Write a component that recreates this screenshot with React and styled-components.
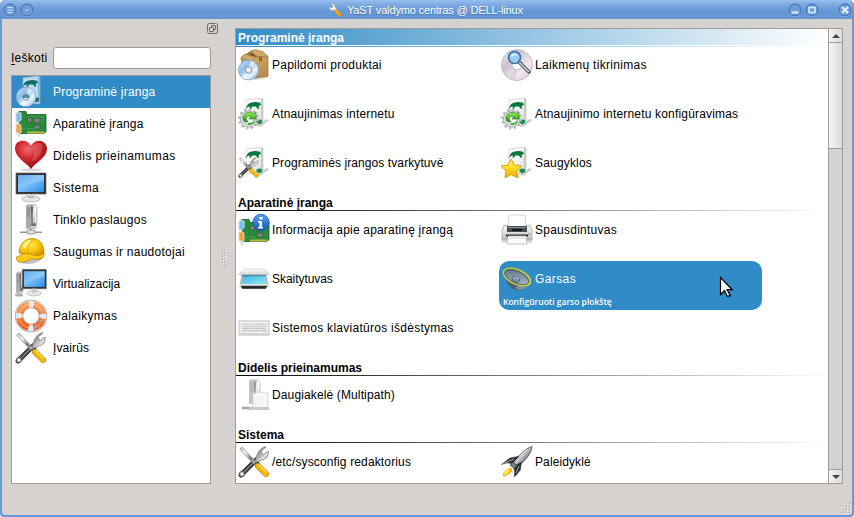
import React from "react";
import styled, { createGlobalStyle, css } from "styled-components";

const GlobalStyle = createGlobalStyle`
  * { box-sizing: border-box; }
  html, body { margin: 0; padding: 0; background: #fff; overflow: hidden; }
  body { font-family: "Liberation Sans", Arial, sans-serif; font-size: 12px; color: #000; }
`;

/* ---------- window frame ---------- */
const Window = styled.div`
  width: 854px;
  height: 517px;
  padding: 0 2px 2px;
  display: flex;
  flex-direction: column;
  background: #6799d6;
  border-radius: 5px 5px 4px 4px;
  overflow: hidden;
`;
const TitleBar = styled.header`
  display: flex;
  align-items: center;
  flex: 0 0 19px;
  margin: 0 -2px;
  padding: 0 2px 0 3px;
  background: linear-gradient(#98bff0 0, #86b0e6 3px, #709fdb 8px, #6597d4 12px, #6496d3 100%);
`;
const ButtonGroup = styled.div`
  display: flex;
  gap: ${(p) => p.$gap}px;
`;
const TitleText = styled.h1`
  flex: 1;
  display: flex;
  align-items: center;
  gap: 5px;
  padding: 1px 0 0 294px;
  margin: 0;
  font-size: 11px;
  font-weight: 400;
  line-height: 18px;
  letter-spacing: ${(p) => p.$ls}px;
  white-space: nowrap;
  color: #fff;
  text-shadow: 0 1px 1px #4678b4;
`;
const WinSvg = styled.svg`
  display: block;
  margin-left: ${(p) => p.$ml || 0}px;
`;
const Body = styled.div`
  flex: 1;
  display: flex;
  position: relative;
  background: #d6d2cf;
  border-radius: 0 0 3px 3px;
`;

/* ---------- left dock ---------- */
const Dock = styled.aside`
  width: 217px;
  padding: 4px 0 0 9px;
`;
const DockHead = styled.div`
  display: flex;
  justify-content: flex-end;
  height: 24px;
  padding-right: 1px;
`;
const SearchRow = styled.label`
  display: flex;
  align-items: center;
  height: 22px;
  width: 200px;
  letter-spacing: 0.25px;
`;
const SearchLabel = styled.span`
  width: 42px;
  white-space: nowrap;
`;
const Mnemonic = styled.span`
  display: inline-block;
  line-height: 12px;
  border-bottom: 1px solid #000;
`;
const SearchInput = styled.input`
  flex: 1;
  min-width: 0;
  height: 22px;
  border: 1px solid #9c9a98;
  border-radius: 3px;
  background: #fff;
  outline: none;
`;
const GroupList = styled.ul`
  list-style: none;
  margin: 6px 0 0;
  padding: 0;
  width: 200px;
  height: 409px;
  border: 1px solid #9f9d9b;
  background: #fff;
`;
const Group = styled.li`
  display: flex;
  align-items: center;
  gap: 6px;
  height: 32px;
  padding-left: 3px;
  white-space: nowrap;
  letter-spacing: ${(p) => p.$ls ?? 0.4}px;
  ${(p) => p.$active && css`background: #308cc6; color: #fff;`}
`;
const Splitter = styled.div`
  width: 16px;
  padding: 230px 0 0 3px;
`;

/* ---------- module view ---------- */
const View = styled.main`
  display: flex;
  width: 608px;
  height: 456px;
  margin-top: 9px;
  border: 1px solid #9f9d9b;
  background: #fff;
`;
const Content = styled.div`
  flex: 1;
  overflow: hidden;
`;
const SectionTitle = styled.h2`
  height: 18px;
  margin: 0;
  padding: 1px 0 0 2px;
  font-size: 12px;
  font-weight: 700;
  line-height: 16px;
  letter-spacing: ${(p) => p.$ls ?? 0}px;
  background: linear-gradient(90deg, #000, #fff) 0 16px / 100% 1px no-repeat;
  ${(p) => p.$active && css`
    color: #fff;
    background:
      linear-gradient(rgba(255,255,255,0.92), rgba(255,255,255,0.92)) 0 16px / 100% 1px no-repeat,
      linear-gradient(90deg, #308cc6, #fff);
  `}
`;
const Grid = styled.div`
  display: grid;
  grid-template-columns: 263px 263px;
  grid-auto-rows: 49px;
`;
const Module = styled.div`
  padding: 2px;
  border-radius: 10px;
  white-space: nowrap;
  ${(p) => p.$active && css`background: #308cc6; color: #fff;`}
`;
const ModuleLine = styled.div`
  display: flex;
  align-items: center;
  gap: 2px;
  height: 32px;
  letter-spacing: ${(p) => p.$ls ?? 0.4}px;
`;
const Description = styled.div`
  padding-left: 2px;
  font: 600 8.5px/13px "Open Sans", sans-serif;
`;
const ScrollBar = styled.div`
  display: flex;
  flex-direction: column;
  width: 14px;
  border-left: 1px solid #9f9d9b;
  background: #d5d3d1;
`;
const Stepper = styled.div`
  display: flex;
  align-items: center;
  justify-content: center;
  height: 14px;
  background: linear-gradient(90deg, #f7f6f5, #dddbd9);
  border: 0 solid #9f9d9b;
  border-width: ${(p) => (p.$end ? "1px 0 0" : "0 0 1px")};
`;
const Thumb = styled.div`
  height: 106px;
  background: linear-gradient(90deg, #f6f5f4, #dcdad8);
  border-bottom: 1px solid #9f9d9b;
`;
const Track = styled.div`
  flex: 1;
`;
const Grip = styled.svg`
  position: absolute;
  right: 0;
  bottom: 0;
`;
const Pointer = styled.svg`
  position: absolute;
  left: 717px;
  top: 257px;
`;
const IconSvg = styled.svg`
  flex: none;
  display: block;
  overflow: visible;
`;
const Defs = styled.svg`
  position: absolute;
  width: 0;
  height: 0;
`;

/* ---------- icon drawings ---------- */
const Lin = ({ id, stops, v }) => (
  <linearGradient id={id} x1="0" y1="0" x2={v ? 0 : 1} y2="1">
    {stops.map((c, i) => <stop key={i} offset={i / (stops.length - 1)} stopColor={c} />)}
  </linearGradient>
);
const Rad = ({ id, stops }) => (
  <radialGradient id={id} cx=".4" cy=".3" r=".75">
    {stops.map((c, i) => <stop key={i} offset={i / (stops.length - 1)} stopColor={c} />)}
  </radialGradient>
);
const SharedDefs = () => (
  <Defs aria-hidden="true">
    <defs>
      <Lin id="screen" stops={["#2f8be2", "#74bbf8", "#2d8cea"]} />
      <Rad id="heart" stops={["#ef6a68", "#cb2128", "#8e0c13"]} />
      <Rad id="helmet" stops={["#fff15d", "#fcc90c", "#c68c00"]} />
      <Lin id="disc" stops={["#dff0ff", "#8ebde9", "#e8f5ff", "#6ea5dc"]} />
      <Lin id="cd" stops={["#f5f3f6", "#cbc6cd", "#f2e5ef", "#d4d1d6"]} />
      <Lin id="metal" stops={["#f5f5f5", "#9c9c9c", "#e6e6e6", "#707070"]} />
      <Lin id="steel" stops={["#b3b7bc", "#f8f8f8", "#6f7479", "#c8cacc"]} />
      <Lin id="paper" stops={["#ffffff", "#f4f4f4", "#cfd1cf"]} />
      <Lin id="green" stops={["#a6f069", "#55c72c", "#127b18"]} v />
      <Lin id="gold" stops={["#fff578", "#ffd91a", "#e9a900"]} v />
      <Lin id="tower" stops={["#777", "#eee", "#b9b9b9", "#efefef"]} />
      <Lin id="printer" stops={["#fafafa", "#dcdcdc", "#b4b4b4"]} v />
      <Lin id="lid" stops={["#ffffff", "#d3d6d6"]} v />
      <Lin id="scan" stops={["#3eb4dc", "#8ee5fb"]} />
      <Lin id="cone" stops={["#4f626f", "#8597a4", "#b3c2cc"]} />
      <Lin id="info" stops={["#5ba4ed", "#1057af"]} v />
      <Lin id="wood" stops={["#dcb574", "#b58545"]} />
      <Lin id="orange" stops={["#ff9b58", "#ee5a16"]} v />
    </defs>
  </Defs>
);

const Tower = () => (
  <g>
    <path d="M11 1.5 13 0h9l-2 1.5V25h-9z" fill="#c8c8c8" />
    <rect x="11" y="1.5" width="5" height="23" fill="#aaa" />
    <path d="M12 4h3M12 6h3M12 8h3M12 10h3M12 12h3" stroke="#777" strokeWidth=".7" />
    <rect x="16" y="1.5" width="6.5" height="23" fill="url(#tower)" />
    <path d="M17 3v19" stroke="#222" />
    <path d="M20.5 3v15" stroke="#fff" />
    <rect x="18" y="19" width="3" height="3" rx="1.5" fill="#666" />
  </g>
);
const Board = () => (
  <g>
    <path d="M2 4c1-1 2 0 2 1v23" fill="none" stroke="#b9bec1" strokeWidth="1.2" />
    <path d="M4 2.500h7l1 3h19v17l-2 2H5z" fill="#2a8a3b" stroke="#12661f" strokeWidth=".8" />
    <path d="M13 8h16M7 20h14M22 19l6-9" stroke="#55ad58" strokeWidth=".7" />
    <path d="M12 9h5v4h-5zM19 9h6v5h-6zM19 16h6v4h-6z" fill="#7d8480" stroke="#345f3f" strokeWidth=".8" />
    <path d="M12 22.500h17v2H12z" fill="#c4bd45" />
    <path d="M1 4h5v7l-2 2H1z" fill="#78bdf0" stroke="#d4dae0" />
    <path d="M1 15h4l1 2v7H1z" fill="#f2a23b" stroke="#dfd8c8" />
  </g>
);
const BoxArt = ({ tint }) => (
  <g>
    <path d="m18 27 11-6c2 1 2 2 0 3l-8 5z" fill="#555" opacity=".3" />
    <path d="m8 2 15-2 2 1v26l-2 1-15-2z" fill={tint ? "#b9daec" : "url(#paper)"} stroke={tint ? "#94c2dc" : "#c2c5c2"} strokeWidth=".6" />
    <path d="M23 0v27l2-1V1z" fill={tint ? "#86b9d6" : "#c7c9c6"} />
    <path d="M8 11.500C8.500 7 11 4.500 14.500 4.500c2-1.500 5 .2 7.500 0l1 2.500-2.500 1 .8 2.400h-2l-1.300-2h-4l-1 2.400h-1.300V8.600c-1.500 0-2.200.6-3.700 2.900z" fill={tint ? "#126e67" : "#08773b"} />
    <path d="M18 24c1-3 3-3 6-2v3l-3 1.500z" fill={tint ? "#17766b" : "#1c8d51"} />
  </g>
);
const Monitor = () => (
  <g>
    <path d="M1 1h30v21H1z" fill="#303336" stroke="#666" strokeWidth=".7" />
    <path d="M3 3h26v17H3z" fill="url(#screen)" />
    <path d="M3 3h26v6C17 9 11 13 3 18z" fill="#b7defc" opacity=".4" />
    <path d="M13 22h6v4h-6z" fill="#d6d6d6" />
    <ellipse cx="16" cy="27" rx="9" ry="2.8" fill="#e8e8e8" stroke="#aaa" strokeWidth=".8" />
    <path d="M13 25c1 1 5 1 6 0" stroke="#aaa" fill="none" />
  </g>
);
const Tools = () => (
  <g strokeLinecap="round">
    <path d="m3 29 15-15" stroke="#34393c" strokeWidth="5" />
    <path d="m5 27 13-13" stroke="#858b8e" strokeWidth="1.2" />
    <circle cx="4" cy="28" r="2.6" fill="#ccc" stroke="#555" />
    <circle cx="4" cy="28" r="1" fill="#fff" />
    <path d="M18 17c-1-3 0-6 1-8 2-5 5-8 9-8l-5 4 2 4 5-4c1 5-2 8-6 9z" fill="url(#metal)" stroke="#777" strokeWidth=".8" />
    <path d="m2 3 2-2 14 15-2 2z" fill="url(#steel)" stroke="#8a8a8a" strokeWidth=".7" />
    <path d="m17 18 3-3 2 3-2 2z" fill="#444" />
    <path d="m20 20 8 8" stroke="#b97d00" strokeWidth="6" />
    <path d="m20 20 8 8" stroke="#f5b70d" strokeWidth="4.8" />
    <path d="m21 19 7 7" stroke="#ffe14c" strokeWidth="1.3" />
  </g>
);
const Disc = ({ cx, cy, r }) => (
  <g>
    <circle cx={cx} cy={cy} r={r} fill="url(#disc)" stroke="#7ba1c6" strokeWidth=".8" />
    <path d={`M${cx} ${cy}l${r * 0.2} ${-r * 0.95} ${r * 0.5} ${r * 0.2}zM${cx} ${cy}l${-r * 0.2} ${r * 0.95} ${-r * 0.5} ${-r * 0.2}z`} fill="#fff" opacity=".55" />
    <circle cx={cx} cy={cy} r={r * 0.34} fill="#d5dbe0" stroke="#6a8fb0" strokeWidth=".8" />
    <circle cx={cx} cy={cy} r={r * 0.14} fill="#fff" />
  </g>
);

const art = {
  software: <g><BoxArt tint /><Disc cx={11} cy={21} r={9.8} /><path d="M8 20c1-2 5-2 6 0v2H8z" fill="#12786c" opacity=".75" /></g>,
  board: <g transform="translate(0 1)"><Board /></g>,
  heart: (
    <g>
      <ellipse cx="16" cy="29.800" rx="11" ry="1.500" fill="#bbb" opacity=".6" />
      <path d="M16 29C12 23 0 18 0 8.500C0 3 4 .8 8 .8s7 3 8 5c1-2 4-5 8-5s8 3 8 8C32 18 20 23 16 29z" fill="url(#heart)" />
      <path d="M17 7c2-4 7-6 11-2-1 8-4 13-12 17 4-6 4-10 1-15z" fill="#ef8a85" opacity=".35" />
    </g>
  ),
  monitor: <Monitor />,
  server: (
    <g><Tower /><path d="M5 28h22M16 25v3" stroke="#999" strokeWidth="2" /><path d="M5 27.500h7M20 27.500h7" stroke="#ccc" /><rect x="12" y="26" width="8" height="4" rx="1" fill="#ddd" stroke="#888" strokeWidth=".8" /></g>
  ),
  helmet: (
    <g>
      <path d="M3 26c7 3 18 3 25-4v-2z" fill="#777" opacity=".45" />
      <path d="M4 17C4 9 9 2.500 17 2.500c8 0 12 6 12 14.500-2 5-8 5-13 3z" fill="url(#helmet)" stroke="#bb8508" strokeWidth=".7" />
      <path d="M12 4.500c3-2 6-2 8-1-4 1-7 5-7.500 12" fill="none" stroke="#e0a300" strokeWidth="1" />
      <path d="M2 20.500c3 .3 4-2.500 7-3 4-.6 6 .5 9 1.500 4 1 8 .5 11-2 .6 3-1 5-4 6-3 .8-6 .4-8.500-.4-4 3-9 4.500-13.500 3C1.800 25 .7 22 2 20.500z" fill="#fcc91b" stroke="#b98300" strokeWidth=".8" />
      <path d="M9 12c1-4 3-6 6-7.500" fill="none" stroke="#fff9b0" strokeWidth="2" />
    </g>
  ),
  virtual: (
    <g>
      <g transform="translate(-6 3.500) scale(.66 .88)"><Tower /></g>
      <ellipse cx="4" cy="27" rx="4" ry="1.500" fill="#888" opacity=".7" />
      <g transform="translate(6.500 .5) scale(.8 .92)"><Monitor /></g>
    </g>
  ),
  buoy: (
    <g fill="none">
      <circle cx="16" cy="16" r="12" stroke="#a6a4a0" strokeWidth="8.400" />
      <circle cx="16" cy="16" r="12" stroke="url(#orange)" strokeWidth="7" />
      <circle cx="16" cy="16" r="12" stroke="#dcebfa" strokeWidth="7" strokeDasharray="5 13.850" strokeDashoffset="2.500" />
      <circle cx="16" cy="16" r="15.200" stroke="#d9d5ce" strokeWidth="1" strokeDasharray="17 7" strokeDashoffset="-3" />
      <circle cx="16" cy="16" r="12" stroke="#fff" strokeWidth="1.200" opacity=".35" />
      <path d="M28 20c-6 1-8 2-8 8l-1 3M20 25l5 3" stroke="#b5aaa0" strokeWidth="1" />
    </g>
  ),
  tools: <Tools />,
  parcel: (
    <g>
      <path d="M6 27h24v2l-13 2z" fill="#888" opacity=".35" />
      <path d="m3 8 11-7 9 1.500L30 7v20l-13 2L5 27z" fill="#a97c42" />
      <path d="m4 8 11-4 14 3v2l-12 1z" fill="#79562e" />
      <path d="m4 9 12-1 14-1v20l-13 2-8-2z" fill="url(#wood)" stroke="#9c7138" strokeWidth=".7" />
      <path d="M13 2l4-1.500 8 2L30 8l-12-1zM2.500 9.500l4-4.500 11 3-3 4z" fill="#d0aa6c" stroke="#a27a43" strokeWidth=".6" />
      <path d="m21 8 3 0v5l-1.500-1.500L21 13z" fill="#8e6535" />
      <Disc cx={10.5} cy={21} r={10} />
    </g>
  ),
  media: (
    <g>
      <circle cx="16" cy="16" r="15.500" fill="url(#cd)" stroke="#b5b2b5" strokeWidth=".8" />
      <path d="M16 16 0 17l2 7zM16 16 8 30h7z" fill="#d3a9db" opacity=".3" />
      <circle cx="16" cy="16" r="5" fill="#fafafa" stroke="#bbb" />
      <circle cx="16" cy="16" r="2" fill="#fff" />
      <path d="m18 13 10 10" stroke="#424b56" strokeWidth="3.200" strokeLinecap="round" />
      <path d="m18 13 10 10" stroke="#d5dae0" strokeWidth="1.500" />
      <circle cx="13.500" cy="8.500" r="6" fill="#8ccdf0" fillOpacity=".8" stroke="#3f6ba6" strokeWidth="1.700" />
      <path d="M10 8c0-4 6-4 7-1-3-1-5 0-7 1z" fill="#d8f5ff" />
    </g>
  ),
  update: (
    <g>
      <BoxArt />
      <circle cx="10.500" cy="21" r="8.200" fill="#dcdcdc" stroke="#929292" strokeWidth=".7" />
      <circle cx="10.500" cy="21" r="9.200" fill="none" stroke="#b7b7b7" strokeWidth="2.500" strokeDasharray="2.400 2.417" />
      <circle cx="10.500" cy="21" r="5.500" fill="#f6f6f6" stroke="#999" strokeWidth=".6" />
      <path d="M5 19.500c1-5.500 7.500-6.500 10.500-3.500l2.500-2v7h-7l2.200-2.200c-1.800-1-3.700-.6-4.700.8-.9 1.900.3 3.400 1.700 4.100-2.800 1.100-5.400-1-5.200-4.200z" fill="url(#green)" stroke="#277a20" strokeWidth=".6" />
      <path d="M10 25c4 0 6-1 7-3 0 3-3 5-7 5z" fill="#3cae2c" />
    </g>
  ),
  manage: <g><BoxArt /><g transform="translate(0 10) scale(.66)"><Tools /></g></g>,
  repos: <g><BoxArt /><path d="m10 12 3.500 6 7 1-5 5 1.500 7-7-3.500L4 31l1-7-5-5 7-1z" fill="url(#gold)" stroke="#d6a018" strokeLinejoin="round" /></g>,
  hwinfo: (
    <g>
      <g transform="translate(0 3)"><Board /></g>
      <circle cx="23" cy="8.500" r="8.200" fill="url(#info)" stroke="#1b59a7" strokeWidth=".8" />
      <path d="M21 7h3v6h1v1.500h-5V13h1.500V8.500H20V7zM21.500 3h3v2.400h-3z" fill="#fff" />
    </g>
  ),
  printer: (
    <g>
      <path d="M2.500 10.500h27l2 5v12l-2 1.500h-27l-2-1.500v-12z" fill="#999" opacity=".35" />
      <path d="M8 1h16l1 12H7z" fill="#fff" stroke="#ccc" strokeWidth=".8" />
      <path d="M3 12h5v3h16v-3h5l2 5v9H1v-9z" fill="url(#printer)" stroke="#aaa" strokeWidth=".6" />
      <path d="M6 12h20v6H6z" fill="#4b4d50" />
      <path d="M7 13.500h18" stroke="#8a8d91" />
      <path d="M11 16h10" stroke="#15181b" strokeWidth="2" />
      <path d="M5 20.500h22v2H5z" fill="#25282b" />
      <path d="M7 22h18l1 8H6z" fill="#fcfcfc" stroke="#b5b5b5" strokeWidth=".8" />
      <path d="M8 24h16" stroke="#d2d2d2" />
      <path d="M27 20h2" stroke="#777" />
    </g>
  ),
  scanner: (
    <g>
      <path d="M6 6h20l5.500 5.500H.5z" fill="url(#lid)" stroke="#bcc0bf" strokeWidth=".6" />
      <path d="M4 12h24l2 11H2z" fill="#b9c0c3" stroke="#90999d" strokeWidth=".6" />
      <path d="M5.500 12h21l1.500 9H4z" fill="url(#scan)" />
      <path d="M4 12h24l.3 1.200H3.700z" fill="#41636f" opacity=".6" />
      <path d="M2 21h28v3l-2 1.500H4L2 24z" fill="#eee" stroke="#bbb" strokeWidth=".5" />
      <path d="M2.500 22.700h27l-2 3h-23z" fill="#24292b" />
    </g>
  ),
  sound: (
    <g>
      <path d="M5 17c2 6 6 9 11 10 5 1 8-1 9-4l3-6z" fill="#4f616e" />
      <path d="M14 25c4 3 9 2 11-1.500l.5-3L17 23z" fill="#8494a0" />
      <ellipse cx="16" cy="14" rx="14.500" ry="7.300" transform="rotate(24 16 14)" fill="url(#cone)" stroke="#cfd42c" strokeWidth="1.400" />
      <ellipse cx="16" cy="14.400" rx="12.800" ry="5.800" transform="rotate(24 16 14)" fill="none" stroke="#405664" strokeWidth=".7" />
      <ellipse cx="15" cy="16.500" rx="4" ry="2.700" transform="rotate(20 15 16)" fill="#7e94a4" stroke="#4b6070" strokeWidth=".8" />
      <path d="M12.500 15.500c2-1.500 4-1 5.500.5" stroke="#bacbd6" fill="none" />
    </g>
  ),
  keyboard: (
    <g>
      <path d="M1 9h30v14H1z" fill="#ededec" stroke="#bfc0bf" />
      <path d="M2 10h28v1H2z" fill="#fff" />
      {[0, 1, 2, 3].map((n) => <path key={n} d={`M${4 + (n % 2) * 0.7} ${12 + n * 2.2}h24`} stroke="#b4b6b4" strokeWidth="1.100" strokeDasharray="1.500 .8" />)}
      <path d="M2 22h28" stroke="#c5c7c5" />
    </g>
  ),
  multipath: <g><g opacity=".68"><Tower /><path d="M4 29h24" stroke="#777" strokeWidth="2.500" /></g><path d="m15 15 2-1h13v15H15z" fill="#f5f5f4" stroke="#d1d1d0" strokeWidth=".8" /><path d="M17 15h10v12" stroke="#fff" fill="none" /><rect x="11" y="28" width="20" height="3" fill="#c8c9c8" /></g>,
  rocket: (
    <g>
      <path d="M31 .5c0 6-6 13-14 20.500l-4-3.500C17 9 24 3 31 .5z" fill="url(#steel)" stroke="#494d53" strokeWidth=".8" />
      <path d="M19 10 9 12 .5 18.500c4-1.500 7-2 11-.5zM20.500 16l-1 8-6 7c0-5-.5-8-.5-11z" fill="#24292e" stroke="#555" strokeWidth=".6" />
      <path d="m12 17 13-13M13 13l-9 4M18 20l-3 7" stroke="#d4d7da" strokeWidth=".8" fill="none" />
      <path d="m9 19 3-3 4 4-3 2.500z" fill="#777d84" stroke="#333" strokeWidth=".6" />
      <path d="M8.500 22c2-1 4 2 2 4-3 2-5 4.500-8 4.500C.5 27.500 4.500 24 8.500 22z" fill="#fbb000" />
      <path d="M8.500 23c1 1 0 2-2 4s-2.500 1.800-3.500 1.800c0-2.500 2.500-4.800 5.500-5.800z" fill="#fff35c" />
    </g>
  ),
};

const Icon = ({ name }) => <IconSvg width="32" height="32" viewBox="0 0 32 32" aria-hidden="true">{art[name]}</IconSvg>;

const WindowButton = ({ children, ml }) => (
  <WinSvg $ml={ml} width="14" height="14" viewBox="0 0 14 14" fill="none">
    <circle cx="7" cy="7.800" r="6" stroke="#9bc0ed" opacity=".7" />
    <circle cx="7" cy="7" r="6" fill="#6d9cd8" stroke="#396dab" />
    {children}
  </WinSvg>
);

/* ---------- data: icon, label, letter spacing, description ---------- */
const groups = [
  ["software", "Programinė įranga", 0.22],
  ["board", "Aparatinė įranga", 0.15],
  ["heart", "Didelis prieinamumas", 0.4],
  ["monitor", "Sistema", 0.4],
  ["server", "Tinklo paslaugos", 0.27],
  ["helmet", "Saugumas ir naudotojai", 0.26],
  ["virtual", "Virtualizacija", 0],
  ["buoy", "Palaikymas", 0.3],
  ["tools", "Įvairūs", 0.1],
];
const sections = [
  { title: "Programinė įranga", items: [
    ["parcel", "Papildomi produktai", 0.23],
    ["media", "Laikmenų tikrinimas", 0.3],
    ["update", "Atnaujinimas internetu", 0.17],
    ["update", "Atnaujinimo internetu konfigūravimas", 0.18],
    ["manage", "Programinės įrangos tvarkytuvė", 0.09],
    ["repos", "Saugyklos", 0.18],
  ] },
  { title: "Aparatinė įranga", items: [
    ["hwinfo", "Informacija apie aparatinę įrangą", 0.19],
    ["printer", "Spausdintuvas", 0.25],
    ["scanner", "Skaitytuvas", -0.05],
    ["sound", "Garsas", 0.4, "Konfigūruoti garso plokštę"],
    ["keyboard", "Sistemos klaviatūros išdėstymas", 0.27],
  ] },
  { title: "Didelis prieinamumas", items: [["multipath", "Daugiakelė (Multipath)", 0.13]] },
  { title: "Sistema", items: [["tools", "/etc/sysconfig redaktorius", 0.14], ["rocket", "Paleidyklė", 0.1]] },
];

export default function App() {
  return (
    <>
      <GlobalStyle />
      <SharedDefs />
      <Window>
        <TitleBar>
          <ButtonGroup $gap={3}>
            <WindowButton><path d="M4.500 4.500h5M4.500 7h5M4.500 9.500h5" stroke="#d9e8fa" /></WindowButton>
            <WindowButton><circle cx="7" cy="7" r=".8" fill="#e4effc" /></WindowButton>
          </ButtonGroup>
          <TitleText $ls={-0.15}>
            <WinSvg width="14" height="14" viewBox="0 0 14 14">
              <path d="M1 4c0 3 3 4 5 3l2 1 1-2-2-2c0-2-1-4-4-3l2 2-1 2z" fill="#f5f5f5" stroke="#9a9a9a" strokeWidth=".5" />
              <path d="m8 8 4 4" stroke="#e59512" strokeWidth="3.500" strokeLinecap="round" />
              <path d="m8 7.500 4 4" stroke="#ffd45a" strokeWidth="1" />
            </WinSvg>
            YaST valdymo centras @ DELL-linux
          </TitleText>
          <ButtonGroup $gap={3}>
            <WindowButton><path d="M3.500 9.500h7" stroke="#e0edfc" strokeWidth="2" /></WindowButton>
            <WindowButton><path d="M4 4.500h6v5H4z" stroke="#e0edfc" strokeWidth="1.500" /></WindowButton>
            <WindowButton ml={16}><path d="m4 4 6 6M10 4l-6 6" stroke="#e0edfc" strokeWidth="2.200" /></WindowButton>
          </ButtonGroup>
        </TitleBar>
        <Body>
          <Dock>
            <DockHead>
              <WinSvg width="11" height="11" viewBox="0 0 11 11" fill="none" stroke="#6b6967">
                <rect x=".5" y=".5" width="10" height="10" rx="2" />
                <rect x="4.500" y="2.500" width="4" height="4" rx=".5" />
                <rect x="2.500" y="4.500" width="4" height="4" rx=".5" fill="#d6d2cf" />
              </WinSvg>
            </DockHead>
            <SearchRow>
              <SearchLabel><Mnemonic>I</Mnemonic>eškoti</SearchLabel>
              <SearchInput />
            </SearchRow>
            <GroupList>
              {groups.map(([icon, label, ls], i) => (
                <Group key={label} $active={i === 0} $ls={ls}><Icon name={icon} />{label}</Group>
              ))}
            </GroupList>
          </Dock>
          <Splitter>
            <WinSvg width="4" height="18" viewBox="0 0 4 18">
              {[0, 3, 6, 9, 12, 15].map((y) => (
                <g key={y}><path d={`M0 ${y + 1.5}h1M2 ${y + 0.5}h1`} stroke="#aaa7a4" /><path d={`M1 ${y + 2.5}h1M3 ${y + 1.5}h1`} stroke="#f5f3f1" /></g>
              ))}
            </WinSvg>
          </Splitter>
          <View>
            <Content>
              {sections.map(({ title, items, ls }, i) => (
                <section key={title}>
                  <SectionTitle $active={i === 0} $ls={ls}>{title}</SectionTitle>
                  <Grid>
                    {items.map(([icon, label, spacing, description]) => (
                      <Module key={label} $active={Boolean(description)}>
                        <ModuleLine $ls={spacing}><Icon name={icon} />{label}</ModuleLine>
                        {description && <Description>{description}</Description>}
                      </Module>
                    ))}
                  </Grid>
                </section>
              ))}
            </Content>
            <ScrollBar>
              <Stepper><svg width="8" height="4" viewBox="0 0 8 4"><path d="M4 0 8 4H0z" fill="#484644" /></svg></Stepper>
              <Thumb />
              <Track />
              <Stepper $end><svg width="8" height="4" viewBox="0 0 8 4"><path d="M4 4 8 0H0z" fill="#484644" /></svg></Stepper>
            </ScrollBar>
          </View>
          <Grip width="13" height="13" viewBox="0 0 13 13">
            {[[10, 1], [7, 4], [10, 4], [4, 7], [7, 7], [10, 7], [1, 10], [4, 10], [7, 10], [10, 10]].map(([x, y]) => (
              <g key={`${x}-${y}`}><rect x={x} y={y} width="1" height="1" fill="#aaa7a4" /><rect x={x + 1} y={y + 1} width="1" height="1" fill="#f6f4f2" /></g>
            ))}
          </Grip>
          <Pointer width="15" height="24" viewBox="0 0 15 24">
            <path d="M3 3v17l4-4 3 6 3-1.500-3-5.500h5z" fill="#000" opacity=".25" />
            <path d="M1.500 1.500v17l4-4 3 6 2.500-1.200-3-5.800h5z" fill="#fff" stroke="#000" strokeWidth="1.200" />
          </Pointer>
        </Body>
      </Window>
    </>
  );
}
